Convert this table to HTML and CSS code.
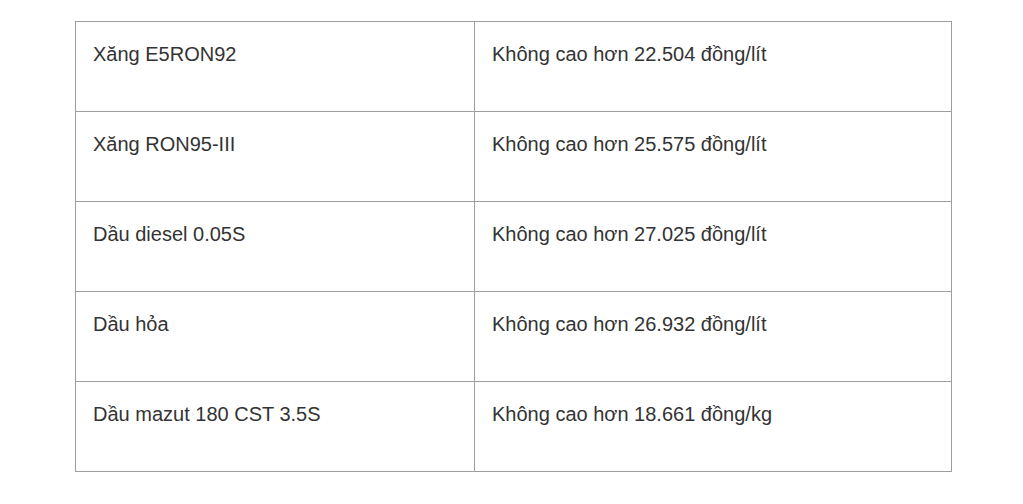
FILE: index.html
```html
<!DOCTYPE html>
<html lang="vi">
<head>
<meta charset="utf-8">
<title>Giá xăng dầu</title>
<link rel="stylesheet" href="styles.css">
</head>
<body>
<div class="page">
  <table class="price-table">
    <colgroup>
      <col class="col-name">
      <col class="col-price">
    </colgroup>
    <tbody>
      <tr><td>Xăng E5RON92</td><td>Không cao hơn 22.504 đồng/lít</td></tr>
      <tr><td>Xăng RON95-III</td><td>Không cao hơn 25.575 đồng/lít</td></tr>
      <tr><td>Dầu diesel 0.05S</td><td>Không cao hơn 27.025 đồng/lít</td></tr>
      <tr><td>Dầu hỏa</td><td>Không cao hơn 26.932 đồng/lít</td></tr>
      <tr><td>Dầu mazut 180 CST 3.5S</td><td>Không cao hơn 18.661 đồng/kg</td></tr>
    </tbody>
  </table>
</div>
</body>
</html>
```

FILE: styles.css
```css
html, body {
  margin: 0;
  padding: 0;
  background: #ffffff;
}

.page {
  padding: 21px 71px 0 75px;
}

.price-table {
  width: 877px;
  border-collapse: collapse;
  table-layout: fixed;
  font-family: "Liberation Sans", Arial, sans-serif;
  font-size: 20px;
  color: #333333;
}

.col-name {
  width: 399px;
}

.price-table td {
  border: 1px solid #9e9e9e;
  height: 90px;
  box-sizing: border-box;
  padding: 21px 17px 0 17px;
  vertical-align: top;
  line-height: 23px;
}
```
